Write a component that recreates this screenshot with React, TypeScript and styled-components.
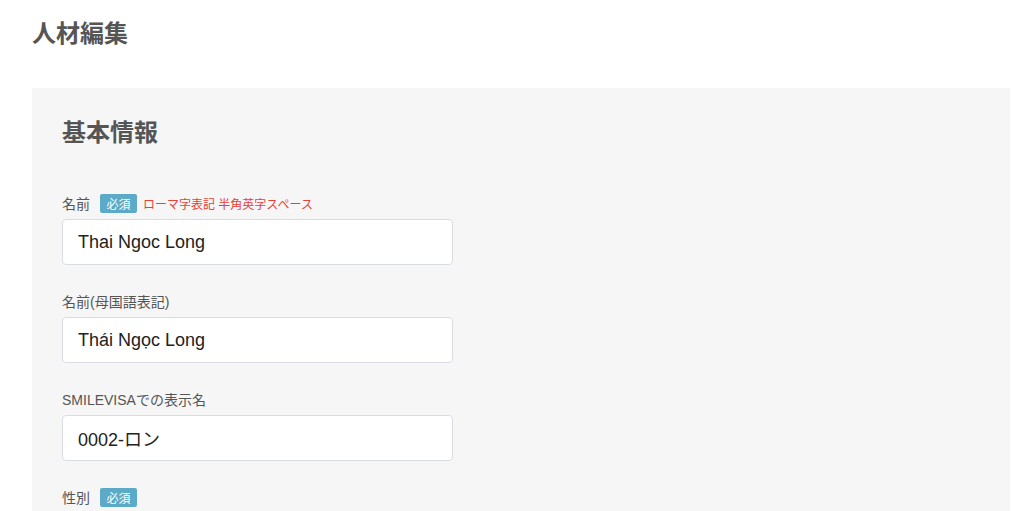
import styled, { createGlobalStyle } from "styled-components";

const GlobalStyle = createGlobalStyle`
  html, body {
    margin: 0;
    padding: 0;
    background: #ffffff;
    font-family: "Liberation Sans", "Noto Sans CJK JP", sans-serif;
    color: #555555;
  }
`;

const Page = styled.div`
  padding: 18px 14px 0 32px;
  height: 511px;
  box-sizing: border-box;
  overflow: hidden;
`;

const PageTitle = styled.h1`
  margin: 0;
  font-size: 24px;
  line-height: 32px;
  font-weight: bold;
  color: #555555;
`;

const Panel = styled.section`
  margin-top: 38px;
  background: #f6f6f6;
  padding: 29px 30px 40px;
`;

const SectionTitle = styled.h2`
  margin: 0 0 44px;
  font-size: 24px;
  line-height: 32px;
  font-weight: bold;
  color: #555555;
`;

const Field = styled.div`
  margin-bottom: 26px;
`;

const LabelRow = styled.div`
  display: flex;
  align-items: center;
  height: 20px;
  margin-bottom: 6px;
`;

const Label = styled.label`
  font-size: 14px;
  color: #555555;
`;

const Badge = styled.span`
  display: inline-flex;
  align-items: center;
  justify-content: center;
  margin-left: 10px;
  width: 37px;
  height: 19px;
  border-radius: 2px;
  background: #5aaac8;
  color: #ffffff;
  font-size: 12px;
`;

const Note = styled.span`
  margin-left: 6px;
  font-size: 12px;
  color: #e8413a;
`;

const Input = styled.input`
  display: block;
  box-sizing: border-box;
  width: 391px;
  height: 46px;
  padding: 0 15px;
  border: 1px solid #d9dde3;
  border-radius: 4px;
  background: #ffffff;
  font-family: "Liberation Sans", "Noto Sans CJK JP", sans-serif;
  font-size: 18px;
  color: #222222;
  outline: none;
`;

type FieldProps = {
  label: string;
  required?: boolean;
  note?: string;
  value?: string;
};

function FormField({ label, required, note, value }: FieldProps) {
  return (
    <Field>
      <LabelRow>
        <Label>{label}</Label>
        {required && <Badge>必須</Badge>}
        {note && <Note>{note}</Note>}
      </LabelRow>
      {value !== undefined && <Input defaultValue={value} />}
    </Field>
  );
}

function App() {
  return (
    <>
      <GlobalStyle />
      <Page>
        <PageTitle>人材編集</PageTitle>
        <Panel>
          <SectionTitle>基本情報</SectionTitle>
          <FormField
            label="名前"
            required
            note="ローマ字表記 半角英字スペース"
            value="Thai Ngoc Long"
          />
          <FormField label="名前(母国語表記)" value="Thái Ngọc Long" />
          <FormField label="SMILEVISAでの表示名" value="0002-ロン" />
          <FormField label="性別" required />
        </Panel>
      </Page>
    </>
  );
}

export default App;
